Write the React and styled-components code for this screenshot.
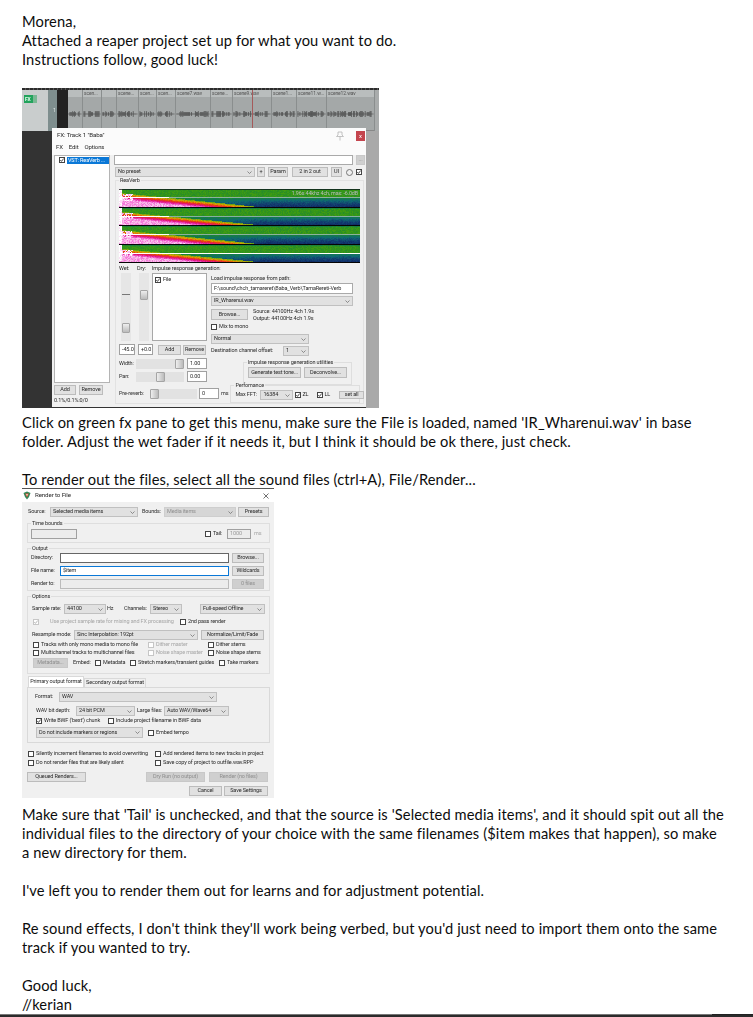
import React, { useMemo } from 'react'
import styled, { createGlobalStyle } from 'styled-components'

const Global = createGlobalStyle`
  html, body { margin: 0; padding: 0; height: 100%; overflow: hidden; background: #fff; }
  body { font-family: Lato, "Open Sans", sans-serif; color: #0c0c0c; }
`

const Page = styled.div`
  padding: 12px 0 0 22px;
  font-size: 14.67px;
  letter-spacing: 0.12px;
  line-height: 19px;
  white-space: nowrap;
`
const Para = styled.p`
  margin: 0 0 ${p => p.$after ?? 19}px;
`
const BottomBar = styled.div`
  position: fixed;
  left: 0; right: 0; bottom: 0;
  height: 3px;
  background: linear-gradient(90deg, #777 0 712px, #222 712px) top / 100% 1px no-repeat, #2b2b2b;
`

// ---- screenshot 1: reaper
const ReaperShot = styled.div`
  position: relative;
  width: 357px;
  height: 320px;
  margin: 0 0 5px;
  overflow: hidden;
  background: #333;
  filter: blur(0.45px);
  font-family: Roboto, "Liberation Sans", sans-serif;
  font-size: 5.5px;
  letter-spacing: -0.13px;
  line-height: 1;
  color: #2a2a2a;
`
const TopStrip = styled.div`
  height: 2px;
  background: repeating-linear-gradient(90deg, #2c2c2c 0 3px, #555 3px 4px);
`
const TrackRow = styled.div`
  display: grid;
  grid-template-columns: 26px 9px 11px 307px 4px;
  height: 41px;
`
const TrackPanel = styled.div`
  background: #c9cdcd;
  padding: 5px 0 0 2px;
`
const FxButton = styled.div`
  display: flex;
  width: 13px;
  height: 8px;
  background: #22a35c;
  color: #e8fff0;
  font-size: 5px;
  font-weight: bold;
  align-items: center;
  padding-left: 1px;
  box-sizing: border-box;
  border-right: 4px solid #7ab894;
`
const TrackNum = styled.div`
  background: #7e8e8e;
  color: #dfe5e5;
  display: flex;
  align-items: center;
  justify-content: flex-end;
  padding: 0 1px 0 0;
`
const TrackGap = styled.div`
  background: #222;
`
const Lane = styled.div`
  display: flex;
  position: relative;
`
const TrackEdge = styled.div`
  background: #a9acac;
`
const Item = styled.div`
  box-sizing: border-box;
  border-right: 1px solid #8a8e8e;
  display: flex;
  flex-direction: column;
`
const ItemLabel = styled.div`
  height: 7px;
  background: #b9bdbd;
  color: #555;
  font-size: 5px;
  padding: 1px 0 0 1px;
  box-sizing: border-box;
  white-space: nowrap;
`
const ItemBody = styled.div`
  flex: 1;
  background: #a4a8a8;
  border-bottom: 1px solid #888;
  display: flex;
  align-items: center;
`
const Playhead = styled.div`
  position: absolute;
  left: 184px; top: 0; bottom: 0;
  width: 1px;
  background: #a55a5a;
`
const Below = styled.div`
  display: flex;
  height: 277px;
`
const BelowLeft = styled.div`
  width: 344px;
  background: #333;
`
const BelowRight = styled.div`
  flex: 1;
  background: #a9a9a9;
`
const FxWindow = styled.div`
  position: absolute;
  left: 30px; top: 40px;
  width: 314px;
  height: 279px;
  background: #f0f0f0;
  display: flex;
  flex-direction: column;
`
const TitleBar = styled.div`
  height: 15px;
  background: #fbfbfb;
  display: flex;
  align-items: center;
  padding-left: 5px;
  font-size: 6.2px;
`
const PinIcon = styled.svg`
  margin: 0 12px 0 auto;
`
const CloseBtn = styled.div`
  width: 9px;
  height: 10px;
  margin-right: 1px;
  background: #c4454e;
  color: #fff;
  font-size: 6px;
  text-align: center;
  line-height: 10px;
`
const MenuBar = styled.div`
  height: 12px;
  background: #fbfbfb;
  display: flex;
  gap: 6px;
  padding: 1px 0 0 4px;
  font-size: 6px;
  box-sizing: border-box;
`
const FxBody = styled.div`
  display: flex;
  flex: 1;
`
const FxLeft = styled.div`
  width: 62px;
  padding-left: 2px;
  box-sizing: border-box;
`
const FxList = styled.div`
  width: 56px;
  height: 228px;
  background: #fff;
  border: 1px solid #b4b4b4;
  box-sizing: border-box;
  display: flex;
  gap: 2px;
  padding: 1px 0 0 4px;
`
const FxEntry = styled.div`
  flex: 1;
  height: 7px;
  background: #0a78d7;
  color: #fff;
  padding: 1px 0 0 1px;
  box-sizing: border-box;
  white-space: nowrap;
`
const FxRight = styled.div`
  width: 252px;
`
const Row = styled.div`
  display: flex;
  align-items: center;
  height: ${p => p.$h ?? 10}px;
  margin-top: ${p => p.$mt ?? 0}px;
  padding-left: ${p => p.$pl ?? 0}px;
`
const Label = styled.span`
  margin-left: ${p => p.$ml ?? 0}px;
  width: ${p => (p.$w ? `${p.$w}px` : 'auto')};
  flex: none;
  white-space: nowrap;
  color: ${p => (p.$off ? '#a6a6a6' : '#2a2a2a')};
`
const Btn = styled.div`
  width: ${p => p.$w}px;
  height: ${p => p.$h ?? 10}px;
  margin-left: ${p => p.$ml ?? 0}px;
  flex: none;
  background: ${p => (p.$off ? '#cfcfcf' : '#e1e1e1')};
  border: 1px solid ${p => (p.$off ? '#c8c8c8' : '#bcbcbc')};
  box-sizing: border-box;
  color: ${p => (p.$off ? '#8f8f8f' : '#2a2a2a')};
  display: flex;
  align-items: center;
  justify-content: center;
  white-space: nowrap;
`
const Field = styled.div`
  width: ${p => p.$w}px;
  height: ${p => p.$h ?? 10}px;
  margin-left: ${p => p.$ml ?? 0}px;
  flex: none;
  background: ${p => (p.$off ? '#ececec' : '#fff')};
  border: 1px solid ${p => p.$border ?? '#a0a0a0'};
  box-sizing: border-box;
  display: flex;
  align-items: center;
  padding-left: 2px;
  color: ${p => (p.$off ? '#9a9a9a' : '#2a2a2a')};
  white-space: nowrap;
`
const SelectBox = styled.div`
  width: ${p => p.$w}px;
  height: ${p => p.$h ?? 10}px;
  margin-left: ${p => p.$ml ?? 0}px;
  flex: none;
  background: ${p => (p.$off ? '#d6d6d6' : '#e1e1e1')};
  border: 1px solid ${p => (p.$off ? '#cecece' : '#c0c0c0')};
  box-sizing: border-box;
  display: flex;
  align-items: center;
  justify-content: space-between;
  padding: 0 2px;
  color: ${p => (p.$off ? '#8f8f8f' : '#2a2a2a')};
  white-space: nowrap;
`
const CheckBox = styled.div`
  width: 6px;
  height: 6px;
  margin-left: ${p => p.$ml ?? 0}px;
  margin-right: ${p => p.$mr ?? 0}px;
  flex: none;
  background: #fff;
  border: 1px solid ${p => (p.$off ? '#c6c6c6' : '#444')};
  box-sizing: border-box;
  display: flex;
`
const Round = styled.div`
  width: 7px;
  height: 7px;
  margin-left: 4px;
  border: 1px solid #777;
  border-radius: 50%;
  box-sizing: border-box;
`

const Select = ({ children, ...rest }) => (
  <SelectBox {...rest}>
    <span>{children}</span>
    <svg width="5" height="3" viewBox="0 0 5 3"><path d="M0.5 0.5 L2.5 2.5 L4.5 0.5" fill="none" stroke="#666" strokeWidth="0.7" /></svg>
  </SelectBox>
)

const Check = ({ on, ...rest }) => (
  <CheckBox {...rest}>
    {on && <svg width="4" height="4" viewBox="0 0 4 4"><path d="M0.3 2 L1.5 3.4 L3.7 0.5" fill="none" stroke={rest.$off ? '#aaa' : '#222'} strokeWidth="0.8" /></svg>}
  </CheckBox>
)

const Group = styled.div`
  position: relative;
  width: ${p => p.$w}px;
  height: ${p => p.$h}px;
  margin-top: ${p => p.$mt ?? 0}px;
  margin-left: ${p => p.$ml ?? 0}px;
  border: 1px solid #dedede;
  box-sizing: border-box;
  flex: none;
`
const Legend = styled.span`
  position: absolute;
  left: 3px; top: -3px;
  background: #f0f0f0;
  padding: 0 1px;
  white-space: nowrap;
`
const ReaPanel = styled.div`
  position: relative;
  width: 249px;
  height: 224px;
  margin: 3px 0 0 1px;
  border: 1px solid #e2e2e2;
  box-sizing: border-box;
  padding: 8px 0 0 3px;
`
const Columns = styled.div`
  display: flex;
`
const SliderV = styled.div`
  width: ${p => p.$w ?? 10}px;
  height: 68px;
  margin-left: ${p => p.$ml ?? 0}px;
  flex: none;
  background: #e6e6e6;
  position: relative;
`
const Dash = styled.div`
  position: absolute;
  left: 1px; right: 1px; top: 21px;
  height: 1px;
  background: #777;
`
const ThumbV = styled.div`
  position: absolute;
  left: 1px; right: 1px;
  top: ${p => p.$t}px;
  height: 10px;
  background: linear-gradient(#eee, #bbb);
  border: 1px solid #a5a5a5;
  border-radius: 1px;
  box-sizing: border-box;
`
const SliderH = styled.div`
  position: relative;
  width: ${p => p.$w}px;
  height: 10px;
  margin-left: ${p => p.$ml ?? 0}px;
  flex: none;
  background: #e2e2e2;
`
const ThumbH = styled.div`
  position: absolute;
  top: 0;
  left: ${p => p.$l}px;
  width: 9px;
  height: 10px;
  background: linear-gradient(90deg, #eee, #bbb);
  border: 1px solid #a5a5a5;
  border-radius: 1px;
  box-sizing: border-box;
`
const FileList = styled.div`
  width: 55px;
  height: 68px;
  margin-left: 3px;
  flex: none;
  background: #fff;
  border: 1px solid #a8a8a8;
  box-sizing: border-box;
  display: flex;
  gap: 2px;
  padding: 3px 0 0 2px;
`
const RightStack = styled.div`
  margin-left: 4px;
  width: 144px;
`
const SmallStack = styled.div`
  margin-left: 5px;
  line-height: 7px;
`
const ColStack = styled.div`
  width: ${p => p.$w}px;
  flex: none;
`

// ---- spectrogram, one band at a time
const stops = [
  [0, [10, 20, 80]], [0.15, [18, 58, 112]], [0.25, [15, 106, 114]], [0.35, [21, 128, 63]],
  [0.45, [58, 154, 18]], [0.55, [127, 168, 16]], [0.62, [224, 160, 0]], [0.7, [232, 58, 16]],
  [0.8, [224, 16, 128]], [0.9, [240, 96, 208]], [1, [255, 255, 255]],
]
const LEVELS = 48
const colorAt = t => {
  for (let i = 1; i < stops.length; i++) {
    if (t <= stops[i][0]) {
      const [a, ca] = stops[i - 1]
      const [b, cb] = stops[i]
      const k = (t - a) / (b - a)
      return `rgb(${ca.map((c, j) => Math.round(c + (cb[j] - c) * k)).join(',')})`
    }
  }
  return '#fff'
}

const makeSpectrogram = () => {
  let seed = 1234
  const rnd = () => {
    seed = (seed * 16807) % 2147483647
    return seed / 2147483647
  }
  const W = 241, BAND = 18.5
  const paths = Array.from({ length: LEVELS + 1 }, () => '')
  let black = ''
  let white = ''
  let line = ''
  for (let b = 0; b < 4; b++) {
    const y0 = Math.round(b * BAND)
    const y1 = Math.round((b + 1) * BAND)
    const hh = y1 - y0
    for (let y = 0; y < hh; y++) {
      const v = (y + 0.5) / hh
      const d = 1 - v
      if (y === hh - 1) {
        black += `M0 ${y0 + y}h${W}v1h-${W}z`
        continue
      }
      for (let x = 0; x < W; x++) {
        const u = x / W
        const s = 1 - u / 0.62 - d / 0.8
        const wedge = s > 0 ? Math.min(0.94, 0.52 + s * 0.95) : 0
        const depth = Math.max(0, (v - 0.45) / 0.55)
        let bg = 0.43 - Math.sqrt(depth) * (0.06 + 0.28 * Math.min(1, u / 0.6))
        if (y === 0) bg -= 0.07
        let t = Math.max(wedge, bg)
        if (x < 3 && v < 0.9) t = 1
        else if (x < 14 && v > 0.28 && v < 0.62 && rnd() > 0.35) t = 0.97
        t += (rnd() - 0.5) * 0.06
        t = Math.min(1, Math.max(0, t))
        paths[Math.round(t * LEVELS)] += `M${x} ${y0 + y}h1v1h-1z`
      }
    }
    const bright = b === 3 ? W : 50
    white += `M0 ${y0 + 8}h${bright}v1h-${bright}z`
    if (b < 3) line += `M50 ${y0 + 8}h${W - 50}v1h-${W - 50}z`
  }
  return { paths, black, white, line }
}

const Spectrogram = () => {
  const { paths, black, white, line } = useMemo(makeSpectrogram, [])
  return (
    <svg width="241" height="74" viewBox="0 0 241 74" style={{ display: 'block' }}>
      <rect width="241" height="74" fill="#0a1450" />
      {paths.map((d, i) => d && <path key={i} d={d} fill={colorAt(i / LEVELS)} />)}
      <path d={line} fill="#a9bcc8" opacity="0.75" />
      <path d={white} fill="#fff" />
      <path d={black} fill="#050505" />
      <path d="M0 0h241v1H0z" fill="#111" opacity="0.7" />
      <text x="239" y="5.5" textAnchor="end" fontSize="5.4" fontFamily="Roboto" fill="#bcbcbc">1.96s 44khz 4ch, max: -6.0dB</text>
    </svg>
  )
}

const items = [
  [15, ''], [19, 'scen...'], [15, ''], [22, 'scene...'], [18, 'scen...'], [19, 'scen...'],
  [35, 'scene7.wav'], [22, 'scene...'], [39, 'scene9.wav'], [25, 'scene1...'], [30, 'scene11.w...'], [48, 'scene12.wav'],
]

const Wave = ({ w, seed }) => {
  let d = ''
  let s = seed * 7919 + 13
  for (let x = 1; x < w - 1; x++) {
    s = (s * 16807) % 2147483647
    const quiet = s % 3 === 0
    const h = quiet ? 0.3 : 1 + (s % 3)
    d += `M${x} ${9 - h}v${h * 2}`
  }
  return (
    <svg width={w} height="18" viewBox={`0 0 ${w} 18`} style={{ display: 'block' }}>
      <path d={`M0 9h${w}`} stroke="#666" strokeWidth="0.5" />
      <path d={d} stroke="#3c3c3c" strokeWidth="0.7" fill="none" />
    </svg>
  )
}

const ReaperScreenshot = () => (
  <ReaperShot>
    <TopStrip />
    <TrackRow>
      <TrackPanel><FxButton>FX</FxButton></TrackPanel>
      <TrackNum>1</TrackNum>
      <TrackGap />
      <Lane>
        {items.map(([w, name], i) => (
          <Item key={i} style={{ width: w }}>
            <ItemLabel>{name}</ItemLabel>
            <ItemBody><Wave w={w} seed={i + 1} /></ItemBody>
          </Item>
        ))}
        <Playhead />
      </Lane>
      <TrackEdge />
    </TrackRow>
    <Below><BelowLeft /><BelowRight /></Below>
    <FxWindow>
      <TitleBar>
        <span>FX: Track 1 "Baba"</span>
        <PinIcon width="8" height="10" viewBox="0 0 8 10">
          <path d="M2 1h4v3l1.5 1.5h-7L2 4zM4 5.5V9.5" fill="none" stroke="#b5b5b5" strokeWidth="0.8" />
        </PinIcon>
        <CloseBtn>x</CloseBtn>
      </TitleBar>
      <MenuBar><span>FX</span><span>Edit</span><span>Options</span></MenuBar>
      <FxBody>
        <FxLeft>
          <FxList><Check on /><FxEntry>VST: ReaVerb ...</FxEntry></FxList>
          <Row $mt={2}>
            <Btn $w={22}>Add</Btn>
            <Btn $w={24} $ml={3}>Remove</Btn>
          </Row>
          <Row $mt={2} $h={7}><Label>0.1%/0.1%:0/0</Label></Row>
        </FxLeft>
        <FxRight>
          <Row $h={10}>
            <Field $w={239} $border="#aaa" />
            <Btn $w={9} $ml={3} $off>...</Btn>
          </Row>
          <Row $mt={2}>
            <Select $w={140} $ml={1}>No preset</Select>
            <Btn $w={8} $ml={2}>+</Btn>
            <Btn $w={20} $ml={3}>Param</Btn>
            <Btn $w={36} $ml={4}>2 in 2 out</Btn>
            <Btn $w={11} $ml={3}>UI</Btn>
            <Round />
            <Check on $ml={3} />
          </Row>
          <ReaPanel>
            <Legend>ReaVerb</Legend>
            <Spectrogram />
            <Row $h={9} $mt={1}>
              <Label $w={18}>Wet:</Label>
              <Label $w={15}>Dry:</Label>
              <Label>Impulse response generation:</Label>
            </Row>
            <Columns>
              <SliderV $ml={2}><Dash /><ThumbV $t={50} /></SliderV>
              <SliderV $ml={8}><ThumbV $t={17} /></SliderV>
              <FileList><Check on /><Label>File</Label></FileList>
              <RightStack>
                <Row $h={9} $mt={1}><Label>Load impulse response from path:</Label></Row>
                <Field $w={142} $h={11} $border="#aaa">F:\sound\chch_tamareret\Baba_Verb\TamaRereti-Verb</Field>
                <Row $mt={2} $h={10}><Select $w={142}>IR_Wharenui.wav</Select></Row>
                <Row $mt={3} $h={11}>
                  <Btn $w={37} $h={11}>Browse...</Btn>
                  <SmallStack>Source: 44100Hz 4ch 1.9s<br />Output: 44100Hz 4ch 1.9s</SmallStack>
                </Row>
                <Row $mt={3} $h={8}><Check $mr={2} /><Label>Mix to mono</Label></Row>
              </RightStack>
            </Columns>
            <Columns>
              <ColStack $w={92}>
                <Row $h={11} $mt={3}>
                  <Field $w={16} $h={11}>-45.0</Field>
                  <Field $w={15} $h={11} $ml={3}>+0.0</Field>
                  <Btn $w={23} $ml={5}>Add</Btn>
                  <Btn $w={23} $ml={2}>Remove</Btn>
                </Row>
              </ColStack>
              <ColStack $w={100}>
                <Row $mt={-7} $h={10}><Select $w={98}>Normal</Select></Row>
                <Row $mt={2} $h={10}>
                  <Label $w={72}>Destination channel offset:</Label>
                  <Select $w={26}>1</Select>
                </Row>
              </ColStack>
            </Columns>
            <Columns>
              <ColStack $w={124}>
                <Row $h={11} $mt={2}>
                  <Label $w={17}>Width:</Label>
                  <SliderH $w={48}><ThumbH $l={39} /></SliderH>
                  <Field $w={20} $h={11} $ml={3}>1.00</Field>
                </Row>
                <Row $h={11} $mt={2}>
                  <Label $w={17}>Pan:</Label>
                  <SliderH $w={48}><ThumbH $l={20} /></SliderH>
                  <Field $w={20} $h={11} $ml={3}>0.00</Field>
                </Row>
              </ColStack>
              <Group $w={109} $h={23} $mt={6}>
                <Legend>Impulse response generation utilities</Legend>
                <Row $h={11} $mt={4} $pl={4}>
                  <Btn $w={53} $h={11}>Generate test tone...</Btn>
                  <Btn $w={43} $h={11} $ml={3}>Deconvolve...</Btn>
                </Row>
              </Group>
            </Columns>
            <Columns>
              <Row $h={11} $mt={3}>
                <Label $w={31}>Pre-reverb:</Label>
                <SliderH $w={47}><ThumbH $l={0} /></SliderH>
                <Field $w={20} $h={11} $ml={2}>0</Field>
                <Label $ml={2}>ms</Label>
              </Row>
              <Group $w={130} $h={18} $ml={2}>
                <Legend>Perfomance</Legend>
                <Row $h={10} $mt={4} $pl={4}>
                  <Label $w={25}>Max FFT:</Label>
                  <Select $w={33}>16384</Select>
                  <Check on $ml={2} $mr={1} /><Label>ZL</Label>
                  <Check on $ml={9} $mr={1} /><Label>LL</Label>
                  <Btn $w={25} $h={8} $ml={9}>set all</Btn>
                </Row>
              </Group>
            </Columns>
          </ReaPanel>
        </FxRight>
      </FxBody>
    </FxWindow>
  </ReaperShot>
)

// ---- screenshot 2: render dialog
const RenderShot = styled.div`
  width: 252px;
  height: 310px;
  margin: -1px 0 7px;
  background: #f0f0f0;
  border-top: 1px solid #555;
  box-sizing: border-box;
  filter: blur(0.45px);
  font-family: Roboto, "Liberation Sans", sans-serif;
  font-size: 5.5px;
  letter-spacing: -0.13px;
  line-height: 1;
  color: #2a2a2a;
`
const DialogTitle = styled.div`
  height: 13px;
  background: #fff;
  display: flex;
  align-items: center;
  padding: 0 5px 0 1px;
  font-size: 6.2px;
`
const DialogClose = styled.svg`
  margin-left: auto;
`
const DialogBody = styled.div`
  padding: 0 0 0 5px;
`
const TabRow = styled.div`
  display: flex;
  align-items: flex-end;
  height: 11px;
  margin-top: 2px;
  padding-left: 1px;
`
const Tab = styled.div`
  height: ${p => (p.$on ? 11 : 9)}px;
  width: ${p => p.$w}px;
  background: ${p => (p.$on ? '#fff' : '#f0f0f0')};
  border: 1px solid #d9d9d9;
  border-bottom: 0;
  box-sizing: border-box;
  display: flex;
  align-items: center;
  justify-content: center;
  white-space: nowrap;
`
const TabPanel = styled.div`
  width: 243px;
  height: 56px;
  border: 1px solid #d9d9d9;
  background: #f0f0f0;
  box-sizing: border-box;
  padding-left: 7px;
`
const LogoMark = styled.svg`
  margin-right: 4px;
`
const Logo = () => (
  <LogoMark width="8" height="9" viewBox="0 0 8 9">
    <path d="M0.5 2 L4 0.5 L7.5 2 L6 6 L4 8.5 L2 6 Z" fill="#2f8a5a" />
    <path d="M2 2.5 L6 2.5 L4 6.5 Z" fill="#d94a2a" />
    <path d="M3 3.2 L5 3.2 L4 5 Z" fill="#fff" />
  </LogoMark>
)

const RenderScreenshot = () => (
  <RenderShot>
    <DialogTitle>
      <Logo />
      <span>Render to File</span>
      <DialogClose width="6" height="6" viewBox="0 0 6 6"><path d="M0.5 0.5L5.5 5.5M5.5 0.5L0.5 5.5" stroke="#333" strokeWidth="0.7" /></DialogClose>
    </DialogTitle>
    <DialogBody>
      <Row $mt={5} $h={10} $pl={1}>
        <Label $w={22}>Source:</Label>
        <Select $w={88}>Selected media items</Select>
        <Label $ml={4} $w={22}>Bounds:</Label>
        <Select $w={72} $off>Media items</Select>
        <Btn $w={31} $ml={2}>Presets</Btn>
      </Row>
      <Group $w={243} $h={20} $mt={6}>
        <Legend>Time bounds</Legend>
        <Row $mt={5} $pl={3}>
          <Field $w={46} $off />
          <Check $ml={128} $mr={2} />
          <Label $w={14}>Tail:</Label>
          <Field $w={24} $off>1000</Field>
          <Label $ml={3} $off>ms</Label>
        </Row>
      </Group>
      <Group $w={243} $h={43} $mt={5}>
        <Legend>Output</Legend>
        <Row $mt={4} $pl={3}>
          <Label $w={29}>Directory:</Label>
          <Field $w={169} $border="#666" />
          <Btn $w={32} $ml={3}>Browse...</Btn>
        </Row>
        <Row $mt={3} $pl={3}>
          <Label $w={29}>File name:</Label>
          <Field $w={169} $border="#0a78d7">$item</Field>
          <Btn $w={32} $ml={3}>Wildcards</Btn>
        </Row>
        <Row $mt={3} $pl={3}>
          <Label $w={29}>Render to:</Label>
          <Field $w={169} $off $border="#bbb" />
          <Btn $w={32} $ml={3} $off>0 files</Btn>
        </Row>
      </Group>
      <Group $w={243} $h={78} $mt={5}>
        <Legend>Options</Legend>
        <Row $mt={7} $pl={4}>
          <Label $w={32}>Sample rate:</Label>
          <Select $w={42}>44100</Select>
          <Label $ml={1} $w={17}>Hz</Label>
          <Label $w={26}>Channels:</Label>
          <Select $w={32}>Stereo</Select>
          <Select $w={65} $ml={18}>Full-speed Offline</Select>
        </Row>
        <Row $mt={3} $pl={5}>
          <Check on $off $mr={11} />
          <Label $off $w={130}>Use project sample rate for mixing and FX processing</Label>
          <Check $mr={2} />
          <Label>2nd pass render</Label>
        </Row>
        <Row $mt={3} $pl={4}>
          <Label $w={42}>Resample mode:</Label>
          <Select $w={124}>Sinc Interpolation: 192pt</Select>
          <Btn $w={63} $ml={3}>Normalize/Limit/Fade</Btn>
        </Row>
        <Row $mt={1} $h={8} $pl={5}>
          <Check $mr={2} /><Label $w={107}>Tracks with only mono media to mono file</Label>
          <Check $off $mr={2} /><Label $off $w={52}>Dither master</Label>
          <Check $mr={2} /><Label>Dither stems</Label>
        </Row>
        <Row $h={8} $pl={5}>
          <Check $mr={2} /><Label $w={107}>Multichannel tracks to multichannel files</Label>
          <Check $off $mr={2} /><Label $off $w={52}>Noise shape master</Label>
          <Check $mr={2} /><Label>Noise shape stems</Label>
        </Row>
        <Row $mt={1} $pl={5}>
          <Btn $w={35} $off>Metadata...</Btn>
          <Label $ml={5} $w={22}>Embed:</Label>
          <Check $mr={2} /><Label $w={27}>Metadata</Label>
          <Check $mr={2} /><Label $w={81}>Stretch markers/transient guides</Label>
          <Check $mr={2} /><Label>Take markers</Label>
        </Row>
      </Group>
      <TabRow>
        <Tab $on $w={56}>Primary output format</Tab>
        <Tab $w={62}>Secondary output format</Tab>
      </TabRow>
      <TabPanel>
        <Row $mt={4}>
          <Label $w={24}>Format:</Label>
          <Select $w={158}>WAV</Select>
        </Row>
        <Row $mt={4}>
          <Label $ml={1} $w={40}>WAV bit depth:</Label>
          <Select $w={59}>24 bit PCM</Select>
          <Label $ml={2} $w={27}>Large files:</Label>
          <Select $w={65}>Auto WAV/Wave64</Select>
        </Row>
        <Row $mt={1} $h={8} $pl={1}>
          <Check on $mr={2} /><Label $w={64}>Write BWF ('bext') chunk</Label>
          <Check $mr={2} /><Label>Include project filename in BWF data</Label>
        </Row>
        <Row $mt={2} $h={11} $pl={1}>
          <Select $w={107} $h={11}>Do not include markers or regions</Select>
          <Check $ml={5} $mr={2} /><Label>Embed tempo</Label>
        </Row>
      </TabPanel>
      <Row $mt={7} $h={8} $pl={1}>
        <Check $mr={2} /><Label $w={119}>Silently increment filenames to avoid overwriting</Label>
        <Check $mr={2} /><Label>Add rendered items to new tracks in project</Label>
      </Row>
      <Row $mt={1} $h={8} $pl={1}>
        <Check $mr={2} /><Label $w={119}>Do not render files that are likely silent</Label>
        <Check $mr={2} /><Label>Save copy of project to outfile.wav.RPP</Label>
      </Row>
      <Row $mt={5}>
        <Btn $w={59}>Queued Renders...</Btn>
        <Btn $w={59} $ml={60} $off>Dry Run (no output)</Btn>
        <Btn $w={59} $ml={4} $off>Render (no files)</Btn>
      </Row>
      <Row $mt={4}>
        <Btn $w={33} $ml={162}>Cancel</Btn>
        <Btn $w={44} $ml={2}>Save Settings</Btn>
      </Row>
    </DialogBody>
  </RenderShot>
)

export default function App() {
  return (
    <Page>
      <Global />
      <Para>
        Morena,<br />
        Attached a reaper project set up for what you want to do.<br />
        Instructions follow, good luck!
      </Para>
      <ReaperScreenshot />
      <Para>
        Click on green fx pane to get this menu, make sure the File is loaded, named 'IR_Wharenui.wav' in base<br />
        folder. Adjust the wet fader if it needs it, but I think it should be ok there, just check.
      </Para>
      <Para $after={0}>To render out the files, select all the sound files (ctrl+A), File/Render...</Para>
      <RenderScreenshot />
      <Para>
        Make sure that 'Tail' is unchecked, and that the source is 'Selected media items', and it should spit out all the<br />
        individual files to the directory of your choice with the same filenames ($item makes that happen), so make<br />
        a new directory for them.
      </Para>
      <Para>I've left you to render them out for learns and for adjustment potential.</Para>
      <Para>
        Re sound effects, I don't think they'll work being verbed, but you'd just need to import them onto the same<br />
        track if you wanted to try.
      </Para>
      <Para $after={0}>
        Good luck,<br />
        //kerian
      </Para>
      <BottomBar />
    </Page>
  )
}
